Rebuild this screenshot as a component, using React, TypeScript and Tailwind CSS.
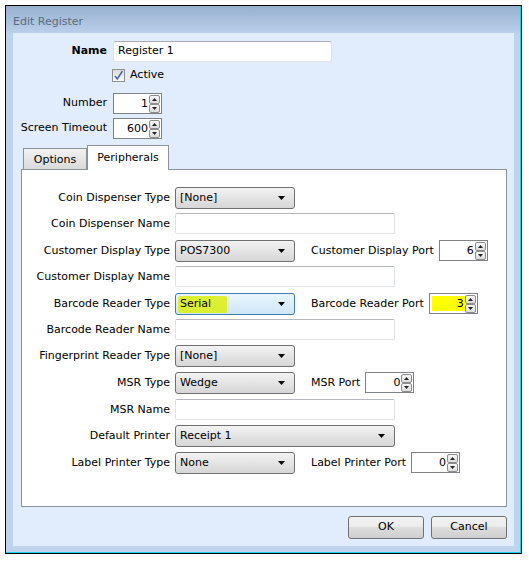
import React from "react";

const font = { fontFamily: '"DejaVu Sans", "Liberation Sans", sans-serif' };

function Arrow() {
  return (
    <svg width="7" height="4" viewBox="0 0 7 4" className="block">
      <path d="M0 0 H7 L3.5 4 Z" fill="#000" />
    </svg>
  );
}

function Combo({
  value,
  wide,
  focus,
  highlight,
}: {
  value: string;
  wide?: boolean;
  focus?: boolean;
  highlight?: boolean;
}) {
  return (
    <div
      className={
        "relative h-[22px] rounded-[3px] border flex items-center pl-[4px] pr-[9px] bg-gradient-to-b " +
        (wide ? "w-[220px] " : "w-[120px] ") +
        (focus
          ? "border-[#3c7fb1] from-[#eaf6fd] to-[#cfe6f7]"
          : "border-[#707070] from-[#f3f3f3] to-[#d6d6d6]")
      }
    >
      <span className="relative flex-1 leading-[20px] text-black">
        {highlight && (
          <span className="absolute left-[-2px] top-[2px] w-[49px] h-[17px] bg-[#dcee10] opacity-85 rounded-[2px]" />
        )}
        <span className="relative">{value}</span>
      </span>
      <Arrow />
    </div>
  );
}

function TextBox({ w = "w-[220px]" }: { w?: string }) {
  return (
    <div
      className={
        w +
        " h-[21px] bg-white border border-[#dfe3e8] border-t-[#b5b9bf] rounded-[2px]"
      }
    />
  );
}

function SpinBtn({ up }: { up?: boolean }) {
  return (
    <div className="w-[11px] h-[9px] rounded-[2px] border border-[#8d8d8d] bg-gradient-to-b from-[#f8f8f8] to-[#dcdcdc] flex items-center justify-center">
      <svg width="5" height="3" viewBox="0 0 5 3" className="block">
        <path d={up ? "M0 3 H5 L2.5 0 Z" : "M0 0 H5 L2.5 3 Z"} fill="#222" />
      </svg>
    </div>
  );
}

function Spinner({ value, yellow }: { value: string; yellow?: boolean }) {
  return (
    <div className="relative w-[49px] h-[21px] border border-[#7f8287] bg-white flex items-center">
      {yellow && (
        <div className="absolute left-[2px] top-[2px] w-[33px] h-[15px] bg-[#ffff00]" />
      )}
      <span className="relative flex-1 text-right pr-[1px] leading-[19px]">
        {value}
      </span>
      <div className="flex flex-col gap-[0px] mr-[1px]">
        <SpinBtn up />
        <SpinBtn />
      </div>
    </div>
  );
}

type Row = {
  label: string;
  h: string;
  control: React.ReactNode;
  port?: { label: string; value: string; yellow?: boolean };
};

const rows: Row[] = [
  { label: "Coin Dispenser Type", h: "h-[26px]", control: <Combo value="[None]" /> },
  { label: "Coin Dispenser Name", h: "h-[27px]", control: <TextBox /> },
  {
    label: "Customer Display Type",
    h: "h-[26px]",
    control: <Combo value="POS7300" />,
    port: { label: "Customer Display Port", value: "6" },
  },
  { label: "Customer Display Name", h: "h-[27px]", control: <TextBox /> },
  {
    label: "Barcode Reader Type",
    h: "h-[26px]",
    control: <Combo value="Serial" focus highlight />,
    port: { label: "Barcode Reader Port", value: "3", yellow: true },
  },
  { label: "Barcode Reader Name", h: "h-[26px]", control: <TextBox /> },
  { label: "Fingerprint Reader Type", h: "h-[27px]", control: <Combo value="[None]" /> },
  {
    label: "MSR Type",
    h: "h-[27px]",
    control: <Combo value="Wedge" />,
    port: { label: "MSR Port", value: "0" },
  },
  { label: "MSR Name", h: "h-[26px]", control: <TextBox /> },
  { label: "Default Printer", h: "h-[27px]", control: <Combo value="Receipt 1" wide /> },
  {
    label: "Label Printer Type",
    h: "h-[27px]",
    control: <Combo value="None" />,
    port: { label: "Label Printer Port", value: "0" },
  },
];

export default function App() {
  return (
    <div
      className="w-[529px] h-[561px] bg-white pt-[5px] pl-[5px] text-[11px] text-black"
      style={font}
    >
      <div className="w-[517px] h-[549px] border border-black">
        <div className="w-[515px] h-[547px] border-r border-b border-r-[#19d3ee] border-b-[#19d3ee] flex flex-col">
          {/* Title bar */}
          <div className="h-[27px] bg-gradient-to-b from-[#96b1cf] to-[#bacfea] flex items-center pl-[7px] pt-[5px] text-[11px] text-[#5b6b7d]">
            Edit Register
          </div>
          {/* Body */}
          <div className="flex-1 bg-[#bfd3ec] pl-[7px] pr-[5px] pb-[6px] flex">
            <div className="w-[501px] bg-[#e1edfd] flex flex-col">
              {/* top fields */}
              <div className="pt-[8px] flex flex-col">
                <div className="flex items-center h-[21px]">
                  <div className="w-[94px] text-right font-bold">Name</div>
                  <div className="ml-[6px] w-[219px] h-[21px] bg-white border border-[#e0e4ea] border-t-[#a9adb3] rounded-[3px] flex items-center pl-[4px]">
                    Register 1
                  </div>
                </div>
                <div className="flex items-center h-[13px] mt-[7px] ml-[99px]">
                  <div className="w-[13px] h-[13px] border border-[#8e8f8f] bg-gradient-to-b from-[#dcdcdc] to-[#fbfbfb] flex items-center justify-center">
                    <svg width="11" height="11" viewBox="0 0 11 11" className="block">
                      <path d="M2 6 L4.3 9 L9.5 1" fill="none" stroke="#4565ad" strokeWidth="1.5" />
                    </svg>
                  </div>
                  <span className="ml-[5px]">Active</span>
                </div>
                <div className="flex items-center h-[21px] mt-[11px]">
                  <div className="w-[94px] text-right">Number</div>
                  <div className="ml-[6px]">
                    <Spinner value="1" />
                  </div>
                </div>
                <div className="flex items-center h-[21px] mt-[4px]">
                  <div className="w-[94px] text-right whitespace-nowrap">Screen Timeout</div>
                  <div className="ml-[6px]">
                    <Spinner value="600" />
                  </div>
                </div>
              </div>
              {/* tabs */}
              <div className="ml-[8px] mt-[6px] flex items-end h-[24px] relative z-10">
                <div className="ml-[2px] w-[64px] h-[21px] border border-b-0 border-[#8c9299] bg-gradient-to-b from-[#f2f2f2] to-[#dadada] flex items-center justify-center pt-[2px]">
                  Options
                </div>
                <div className="w-[82px] h-[25px] mb-[-1px] border border-b-0 border-[#8c9299] bg-white flex items-start justify-center pt-[4px]">
                  Peripherals
                </div>
              </div>
              <div className="ml-[8px] w-[486px] h-[338px] border border-[#8c9299] bg-white pt-[17px] flex flex-col">
                {rows.map((r) => (
                  <div key={r.label} className={r.h + " flex items-start"}>
                    <div className="w-[148px] text-right h-[22px] leading-[22px] whitespace-nowrap">
                      {r.label}
                    </div>
                    <div className="ml-[5px]">{r.control}</div>
                    {r.port && (
                      <div className="flex items-start ml-[16px]">
                        <div className="h-[22px] leading-[22px] whitespace-nowrap">{r.port.label}</div>
                        <div className="ml-[5px]">
                          <Spinner value={r.port.value} yellow={r.port.yellow} />
                        </div>
                      </div>
                    )}
                  </div>
                ))}
              </div>
              {/* buttons */}
              <div className="mt-[9px] ml-[335px] flex gap-[7px]">
                {["OK", "Cancel"].map((b) => (
                  <div
                    key={b}
                    className="w-[76px] h-[23px] rounded-[3px] border border-[#707070] bg-[linear-gradient(#f2f2f2,#ebebeb_50%,#dddddd_50%,#cfcfcf)] flex items-center justify-center"
                  >
                    {b}
                  </div>
                ))}
              </div>
            </div>
          </div>
        </div>
      </div>
    </div>
  );
}
